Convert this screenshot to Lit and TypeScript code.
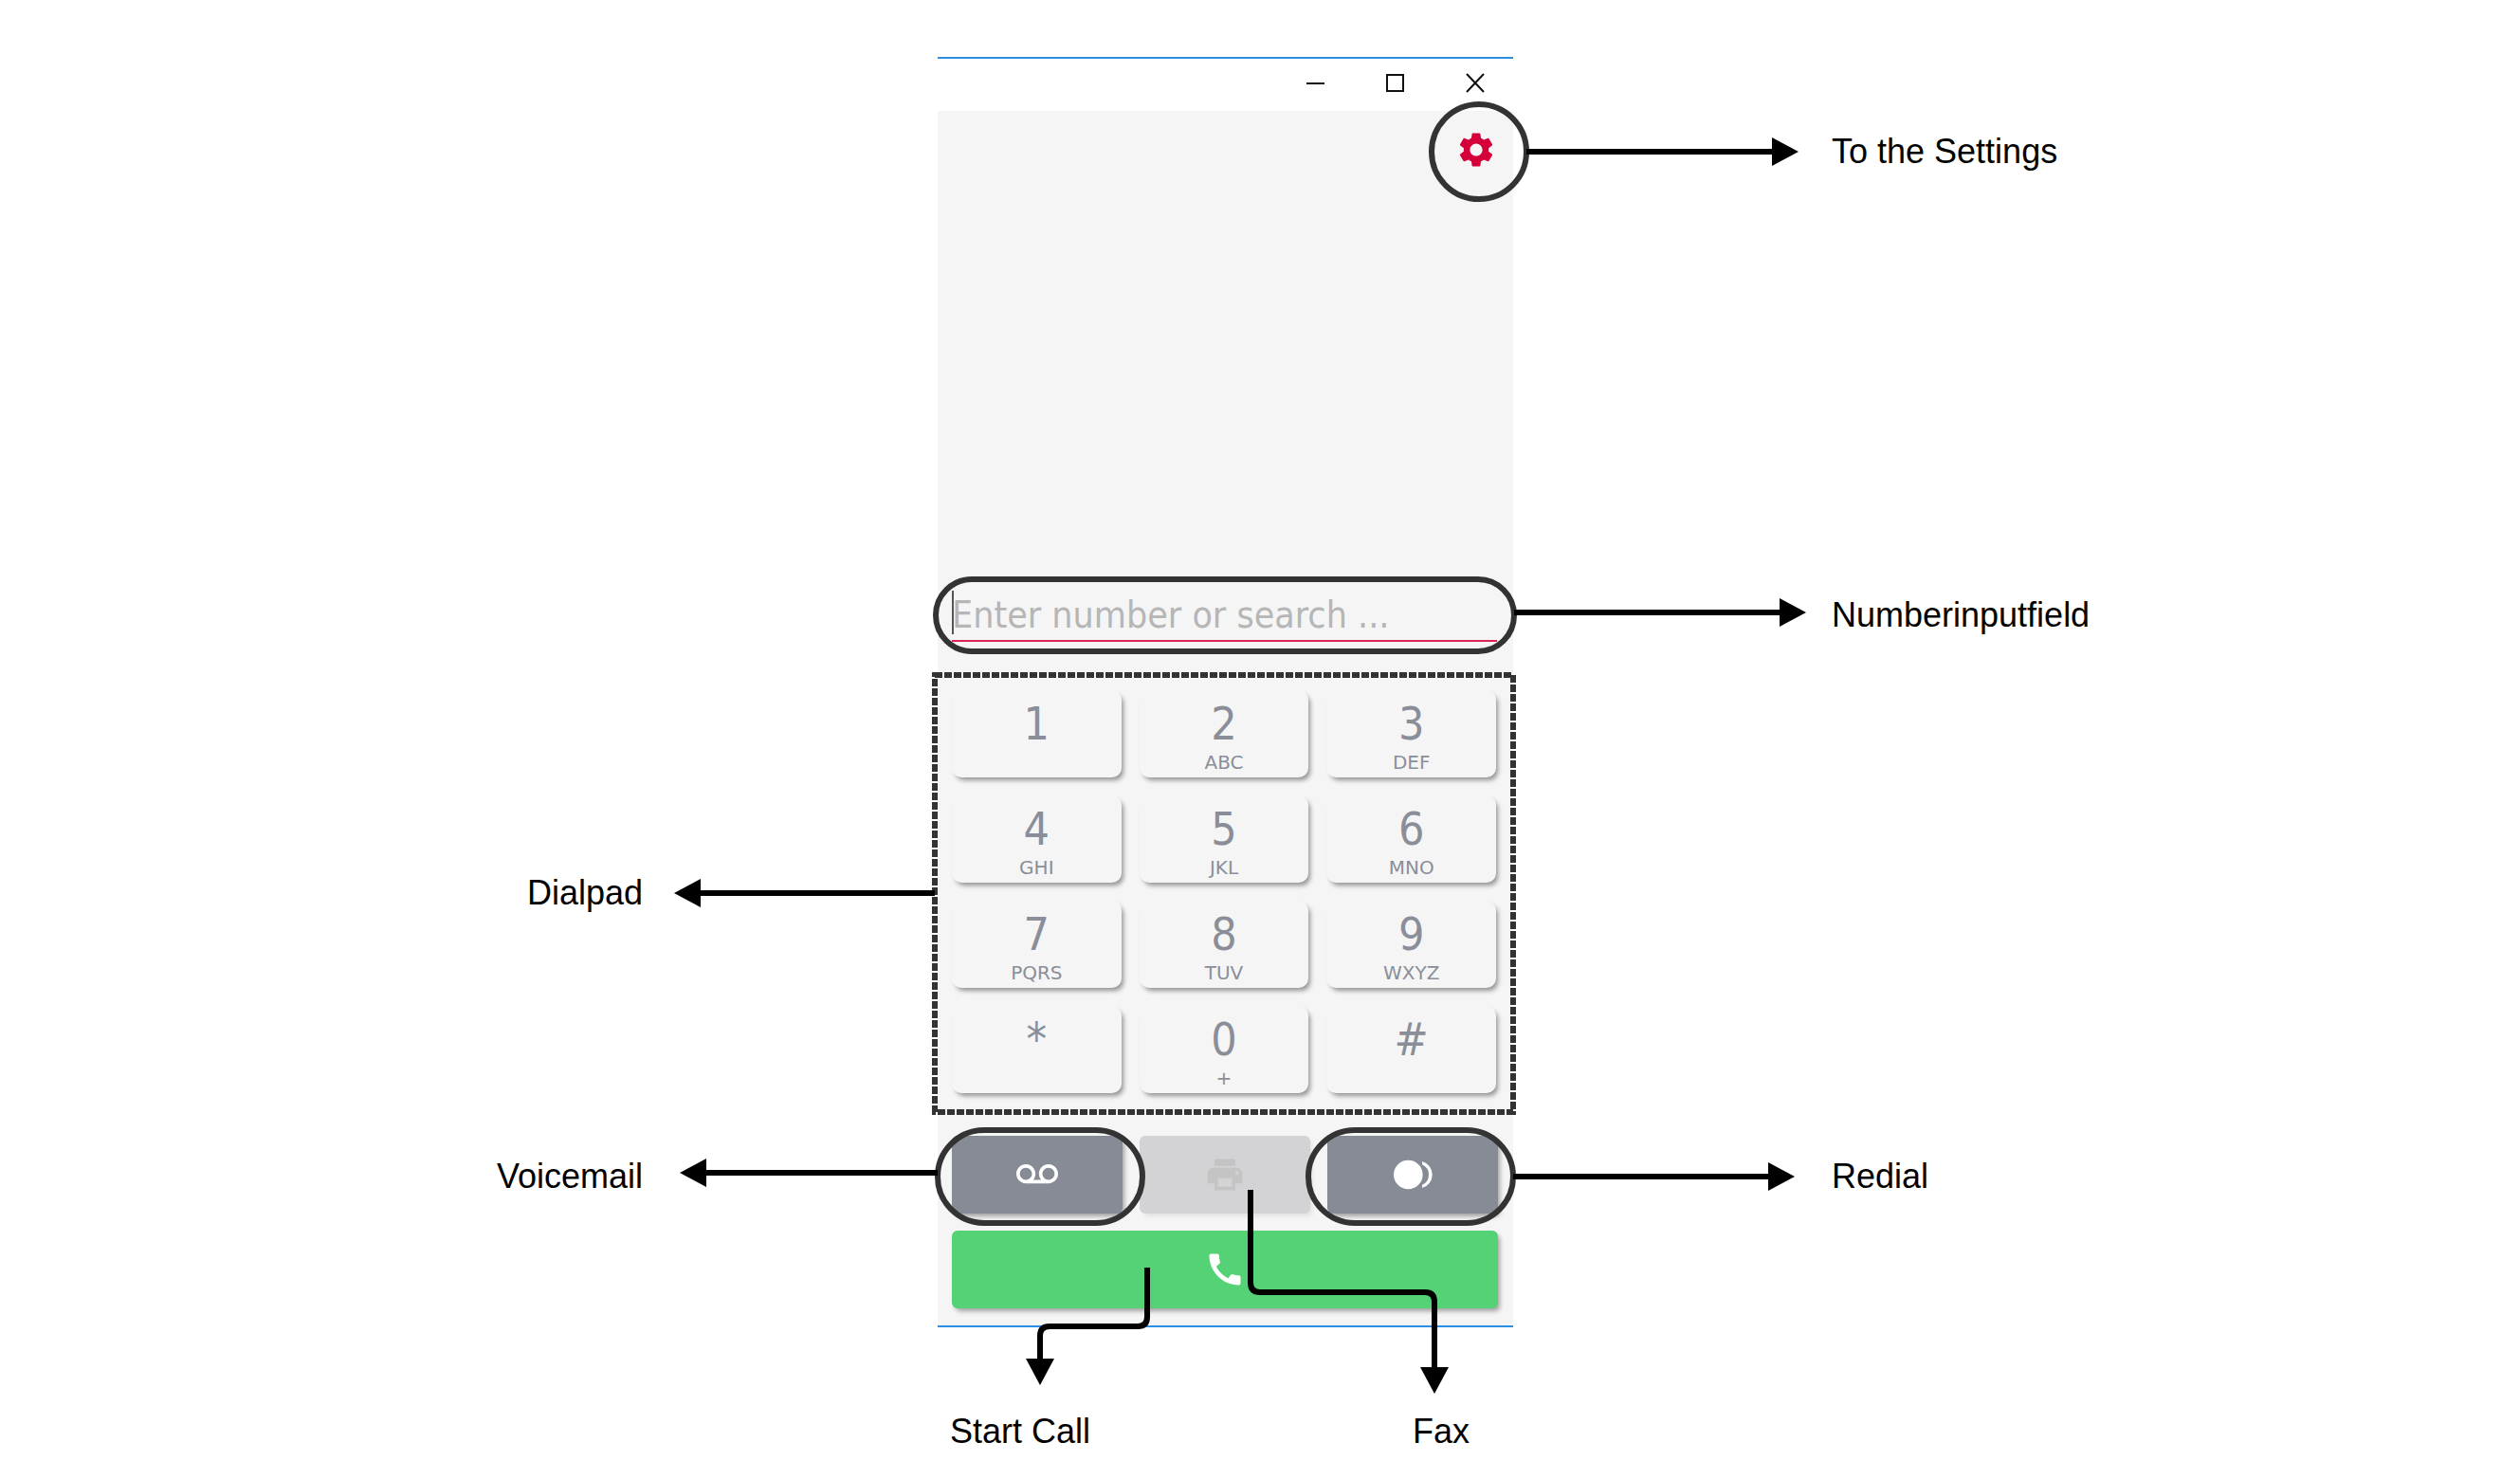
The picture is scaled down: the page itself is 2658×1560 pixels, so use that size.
import { LitElement, html, css, svg, nothing } from "lit";
import { customElement } from "lit/decorators.js";

interface Key {
  digit: string;
  letters?: string;
}

const KEYS: Key[] = [
  { digit: "1" },
  { digit: "2", letters: "ABC" },
  { digit: "3", letters: "DEF" },
  { digit: "4", letters: "GHI" },
  { digit: "5", letters: "JKL" },
  { digit: "6", letters: "MNO" },
  { digit: "7", letters: "PQRS" },
  { digit: "8", letters: "TUV" },
  { digit: "9", letters: "WXYZ" },
  { digit: "*" },
  { digit: "0", letters: "+" },
  { digit: "#" },
];

const icon = (d: string) =>
  html`<svg class="icon" viewBox="0 0 24 24" aria-hidden="true"><path d=${d} /></svg>`;

const GEAR =
  "M19.14 12.94c.04-.3.06-.61.06-.94 0-.32-.02-.64-.07-.94l2.03-1.58c.18-.14.23-.41.12-.61l-1.92-3.32c-.12-.22-.37-.29-.59-.22l-2.39.96c-.5-.38-1.03-.7-1.62-.94l-.36-2.54c-.04-.24-.24-.41-.48-.41h-3.84c-.24 0-.43.17-.47.41l-.36 2.54c-.59.24-1.13.57-1.62.94l-2.39-.96c-.22-.08-.47 0-.59.22L2.74 8.87c-.12.21-.08.47.12.61l2.03 1.58c-.05.3-.09.63-.09.94s.02.64.07.94l-2.03 1.58c-.18.14-.23.41-.12.61l1.92 3.32c.12.22.37.29.59.22l2.39-.96c.5.38 1.03.7 1.62.94l.36 2.54c.05.24.24.41.48.41h3.84c.24 0 .44-.17.47-.41l.36-2.54c.59-.24 1.13-.56 1.62-.94l2.39.96c.22.08.47 0 .59-.22l1.92-3.32c.12-.22.07-.47-.12-.61l-2.01-1.58zM12 15.6c-1.98 0-3.6-1.62-3.6-3.6s1.62-3.6 3.6-3.6 3.6 1.62 3.6 3.6-1.62 3.6-3.6 3.6z";
const VOICEMAIL =
  "M18.5 6C15.46 6 13 8.46 13 11.5c0 1.33.47 2.55 1.26 3.5H9.74c.79-.95 1.26-2.17 1.26-3.5C11 8.46 8.54 6 5.5 6S0 8.46 0 11.5 2.46 17 5.5 17h13c3.04 0 5.5-2.46 5.5-5.5S21.54 6 18.5 6zm-13 9C3.57 15 2 13.43 2 11.5S3.57 8 5.5 8 9 9.57 9 11.5 7.43 15 5.5 15zm13 0c-1.93 0-3.5-1.57-3.5-3.5S16.57 8 18.5 8 22 9.57 22 11.5 20.43 15 18.5 15z";
const PRINTER =
  "M19 8H5c-1.66 0-3 1.34-3 3v6h4v4h12v-4h4v-6c0-1.66-1.34-3-3-3zm-3 11H8v-5h8v5zm3-7c-.55 0-1-.45-1-1s.45-1 1-1 1 .45 1 1-.45 1-1 1zm-1-9H6v4h12V3z";
const HANDSET =
  "M20.01 15.38c-1.23 0-2.42-.2-3.53-.56-.35-.12-.74-.03-1.01.24l-1.57 1.97c-2.83-1.35-5.48-3.9-6.89-6.83l1.95-1.66c.27-.28.35-.67.24-1.02-.37-1.11-.56-2.3-.56-3.53 0-.54-.45-.99-.99-.99H4.19C3.65 3 3 3.24 3 3.99 3 13.28 10.73 21 20.01 21c.71 0 .99-.63.99-1.18v-3.45c0-.54-.45-.99-.99-.99z";
const REDIAL =
  "M1.1 12a8.35 8.35 0 1 0 16.7 0a8.35 8.35 0 1 0 -16.7 0zM17.5 4.3A8 8 0 0 1 17.5 19.7V17.9A6.5 6.5 0 0 0 17.5 6.1Z";

/* Callout lines drawn over the phone, in the page's own coordinates. */
const callouts = svg`
  <g class="ring">
    <circle cx="1560" cy="160" r="50" />
    <rect x="987" y="611" width="610" height="76" rx="38" />
    <rect x="989" y="1192" width="216" height="98" rx="49" />
    <rect x="1380" y="1192" width="216" height="98" rx="49" />
    <path class="dashed" d="M986 712H1596V1173H986Z" />
  </g>
  <g class="line">
    <path d="M1610 160H1870" />
    <path d="M1597 646H1878" />
    <path d="M986 942H737" />
    <path d="M989 1237H743" />
    <path d="M1596 1241H1866" />
    <path d="M1210 1337V1389Q1210 1399 1200 1399H1107Q1097 1399 1097 1409V1434" />
    <path d="M1319 1255V1353Q1319 1363 1329 1363H1503Q1513 1363 1513 1373V1443" />
  </g>
  <g class="head">
    <path d="M1869 145L1897 160L1869 175Z" />
    <path d="M1877 631L1905 646L1877 661Z" />
    <path d="M739 927L711 942L739 957Z" />
    <path d="M745 1222L717 1237L745 1252Z" />
    <path d="M1865 1226L1893 1241L1865 1256Z" />
    <path d="M1082 1433L1097 1461L1112 1433Z" />
    <path d="M1498 1442L1513 1470L1528 1442Z" />
  </g>`;

@customElement("app-root")
export class AppRoot extends LitElement {
  static styles = css`
    :host {
      display: block;
      min-height: 100vh;
      background: #fff;
      color: #000;
      font-family: "Liberation Sans", Arial, sans-serif;
    }
    * {
      box-sizing: border-box;
    }
    button,
    input {
      margin: 0;
      padding: 0;
      border: 0;
      background: none;
      font: inherit;
      color: inherit;
    }
    .page {
      display: grid;
      grid-template-columns: 1fr minmax(0, 607px) 1fr;
      grid-template-rows: 57px 86px 396px 100px 486px 112px 103px auto;
      padding: 60px 73px 30px 0;
    }
    .phone {
      position: relative;
      grid-column: 2;
      grid-row: 1 / span 7;
      display: grid;
      grid-template-rows: subgrid;
      background: #f5f5f5;
      border-top: 2px solid #2b8fe3;
      border-bottom: 2px solid #2b8fe3;
      font-family: "DejaVu Sans Condensed", "DejaVu Sans", sans-serif;
    }
    .titlebar {
      grid-row: 1;
      display: flex;
      justify-content: flex-end;
      background: #fff;
    }
    .titlebar button {
      width: 84px;
      padding: 13px 0 0 3px;
      display: flex;
      justify-content: center;
      align-items: flex-start;
    }
    .glyph {
      width: 24px;
      height: 24px;
      fill: none;
      stroke: #111;
      stroke-width: 2;
    }
    .toolbar {
      grid-row: 2;
      display: flex;
      justify-content: flex-end;
      padding: 19px 17px 0 0;
    }
    .settings {
      width: 44px;
      height: 44px;
      color: #d5003a;
    }
    .icon {
      display: block;
      width: 44px;
      height: 44px;
      fill: currentColor;
    }
    .search {
      position: relative;
      grid-row: 4;
      padding: 23px 17px 0 15px;
    }
    .search input {
      width: 100%;
      height: 55px;
      border-bottom: 2px solid #da2452;
      border-radius: 0;
      outline: none;
      font-size: 39px;
      color: #8a8e99;
    }
    .search input::placeholder {
      color: #b6b6b6;
      opacity: 1;
    }
    .caret {
      position: absolute;
      left: 15px;
      top: 24px;
      width: 2px;
      height: 46px;
      background: #555;
    }
    .keypad {
      grid-row: 5;
      display: grid;
      grid-template-columns: repeat(3, 1fr);
      grid-auto-rows: 92px;
      align-content: start;
      gap: 19px;
      padding: 29px 18px 0 15px;
    }
    .key {
      display: flex;
      flex-direction: column;
      align-items: center;
      padding-top: 6px;
      border-radius: 10px;
      background: #f5f5f5;
      box-shadow: 3px 4px 5px -1px rgba(0, 0, 0, 0.4);
      color: #8a8e99;
    }
    .digit {
      font-size: 48px;
      line-height: 58px;
    }
    .letters {
      font-family: "DejaVu Sans", sans-serif;
      font-size: 20px;
      line-height: 24px;
    }
    .actions {
      grid-row: 6;
      display: grid;
      grid-template-columns: repeat(3, 1fr);
      gap: 18px;
      padding: 13px 16px 17px 15px;
    }
    .action {
      display: flex;
      align-items: center;
      justify-content: center;
      border-radius: 6px;
      background: #878b96;
      box-shadow: 3px 4px 5px -1px rgba(0, 0, 0, 0.35);
      color: #fff;
    }
    .action:disabled {
      background: #d3d3d5;
      box-shadow: 3px 4px 5px -1px rgba(0, 0, 0, 0.08);
      color: #c4c4c5;
    }
    .dial {
      grid-row: 7;
      padding: 1px 16px 18px 15px;
      display: grid;
    }
    .call {
      background: #55d275;
    }
    .callouts {
      position: absolute;
      left: 0;
      top: -2px;
      width: 607px;
      height: 1340px;
      overflow: visible;
      pointer-events: none;
    }
    .ring {
      fill: none;
      stroke: #333;
      stroke-width: 6;
    }
    .dashed {
      stroke-dasharray: 8 2;
    }
    .line {
      fill: none;
      stroke: #000;
      stroke-width: 6;
    }
    .head {
      fill: #000;
    }
    .label {
      align-self: center;
      font-size: 36px;
      line-height: 40px;
    }
    .start {
      grid-column: 1;
      justify-self: end;
      padding-right: 311px;
    }
    .end {
      grid-column: 3;
      padding-left: 336px;
    }
    .row-toolbar {
      grid-row: 2;
    }
    .row-search {
      grid-row: 4;
    }
    .row-keypad {
      grid-row: 5;
    }
    .row-actions {
      grid-row: 6;
    }
    .below {
      grid-column: 2;
      grid-row: 8;
      display: flex;
      justify-content: space-between;
      padding: 90px 46px 0 13px;
    }
  `;

  private renderKey(key: Key) {
    return html`<button class="key" type="button">
      <span class="digit">${key.digit}</span>
      ${key.letters ? html`<span class="letters">${key.letters}</span>` : nothing}
    </button>`;
  }

  render() {
    return html`
      <main class="page">
        <span class="label start row-keypad">Dialpad</span>
        <span class="label start row-actions">Voicemail</span>

        <section class="phone">
          <header class="titlebar">
            <button type="button" aria-label="Minimize">
              <svg class="glyph" viewBox="0 0 24 24"><path d="M2 13H21" /></svg>
            </button>
            <button type="button" aria-label="Maximize">
              <svg class="glyph" viewBox="0 0 24 24"><path d="M3 4H20V21H3Z" /></svg>
            </button>
            <button type="button" aria-label="Close">
              <svg class="glyph" viewBox="0 0 24 24"><path d="M3 3L21 22M21 3L3 22" /></svg>
            </button>
          </header>
          <div class="toolbar">
            <button class="settings" type="button" aria-label="Settings">${icon(GEAR)}</button>
          </div>
          <div class="search">
            <input type="text" aria-label="Number" placeholder="Enter number or search ..." />
            <span class="caret"></span>
          </div>
          <div class="keypad">${KEYS.map((key) => this.renderKey(key))}</div>
          <div class="actions">
            <button class="action" type="button" aria-label="Voicemail">${icon(VOICEMAIL)}</button>
            <button class="action" type="button" aria-label="Fax" disabled>${icon(PRINTER)}</button>
            <button class="action" type="button" aria-label="Redial">${icon(REDIAL)}</button>
          </div>
          <div class="dial">
            <button class="action call" type="button" aria-label="Start call">${icon(HANDSET)}</button>
          </div>
          <svg class="callouts" viewBox="989 60 607 1340" aria-hidden="true">${callouts}</svg>
        </section>

        <span class="label end row-toolbar">To the Settings</span>
        <span class="label end row-search">Numberinputfield</span>
        <span class="label end row-actions">Redial</span>

        <div class="below">
          <span class="label">Start Call</span>
          <span class="label">Fax</span>
        </div>
      </main>
    `;
  }
}
